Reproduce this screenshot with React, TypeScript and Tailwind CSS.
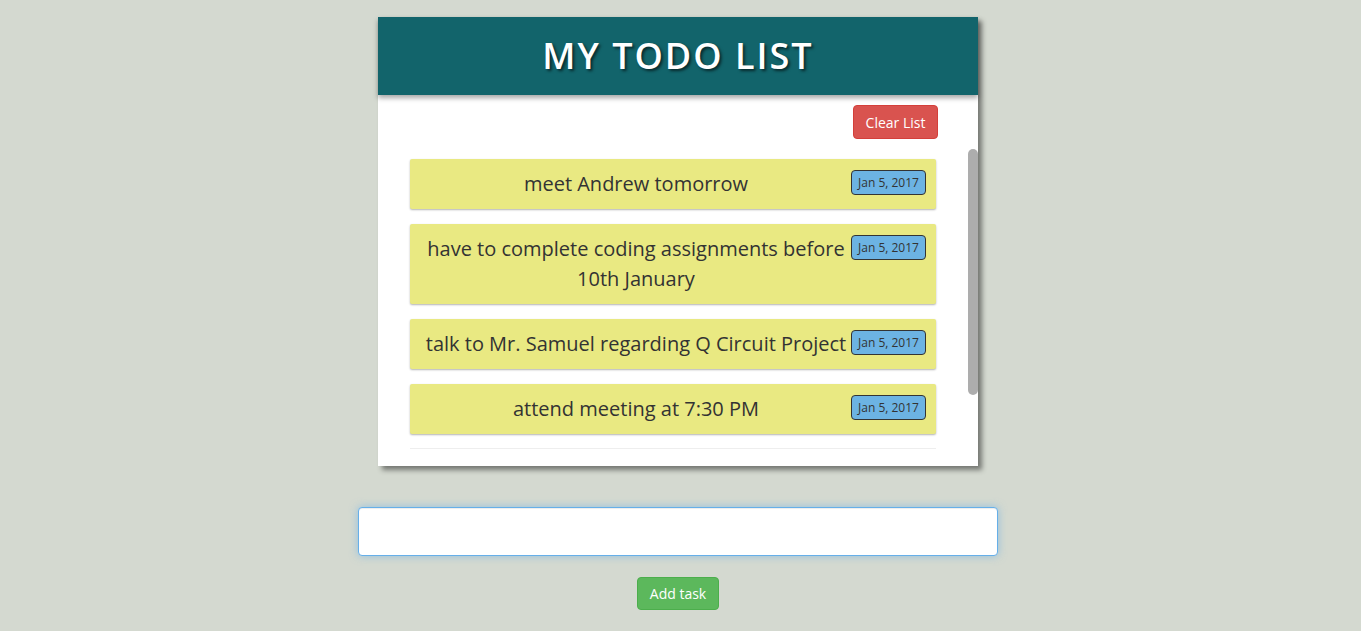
import React from "react";

const items = [
  "meet Andrew tomorrow",
  "have to complete coding assignments before 10th January",
  "talk to Mr. Samuel regarding Q Circuit Project",
  "attend meeting at 7:30 PM",
];

export default function App() {
  return (
    <div
      className="min-h-screen w-full bg-[#d4d9d0] flex flex-col items-center pt-[17px] pr-[5px]"
      style={{ fontFamily: '"Open Sans", "Noto Sans", sans-serif' }}
    >
      <div className="w-[600px] bg-white shadow-[4px_4px_5px_rgba(0,0,0,0.45)] flex flex-col">
        <div className="h-[78px] bg-[#12646b] flex items-center justify-center shadow-[0_3px_5px_rgba(0,0,0,0.35)] relative z-10">
          <h1 className="text-white text-[36px] font-semibold tracking-[2px] [text-shadow:2px_2px_3px_rgba(0,0,0,0.6)] leading-none">
            MY TODO LIST
          </h1>
        </div>
        <div className="flex justify-end pt-[10px] pr-[40px]">
          <button className="h-[34px] w-[85px] rounded-[4px] bg-[#d9534f] border border-[#d43f3a] text-white text-[14px]">
            Clear List
          </button>
        </div>
        <div className="mt-[10px] h-[317px] flex">
          <div className="flex-1 overflow-hidden">
            <div className="px-[32px] pt-[10px] pb-[108px] flex flex-col gap-[15px]">
              {items.map((t) => (
                <div
                  key={t}
                  className="relative bg-[#e9e982] shadow-[0_1px_2px_rgba(0,0,0,0.3)] rounded-[2px] pl-[11px] pr-[85px] py-[10px] text-center text-[20px] leading-[30px] text-[#333]"
                >
                  {t}
                  <span className="absolute right-[10px] top-[11px] h-[25px] w-[75px] flex items-center justify-center rounded-[4px] bg-[#6cb3e3] border border-[#333] text-[12px] text-[#333]">
                    Jan 5, 2017
                  </span>
                </div>
              ))}
              <div className="border-t border-[#eeeeee] -mt-[1px]" />
            </div>
          </div>
          <div className="w-[10px] bg-white">
            <div className="h-[246px] w-[10px] rounded-[5px] bg-[#adadad]" />
          </div>
        </div>
      </div>
      <input
        className="mt-[41px] w-[640px] h-[49px] bg-white rounded-[4px] border border-[#66afe9] outline-none px-3 shadow-[inset_0_1px_1px_rgba(0,0,0,0.075),0_0_8px_rgba(102,175,233,0.6)]"
      />
      <button className="mt-[21px] h-[33px] w-[82px] rounded-[4px] bg-[#5cb85c] border border-[#4cae4c] text-white text-[14px]">
        Add task
      </button>
    </div>
  );
}
